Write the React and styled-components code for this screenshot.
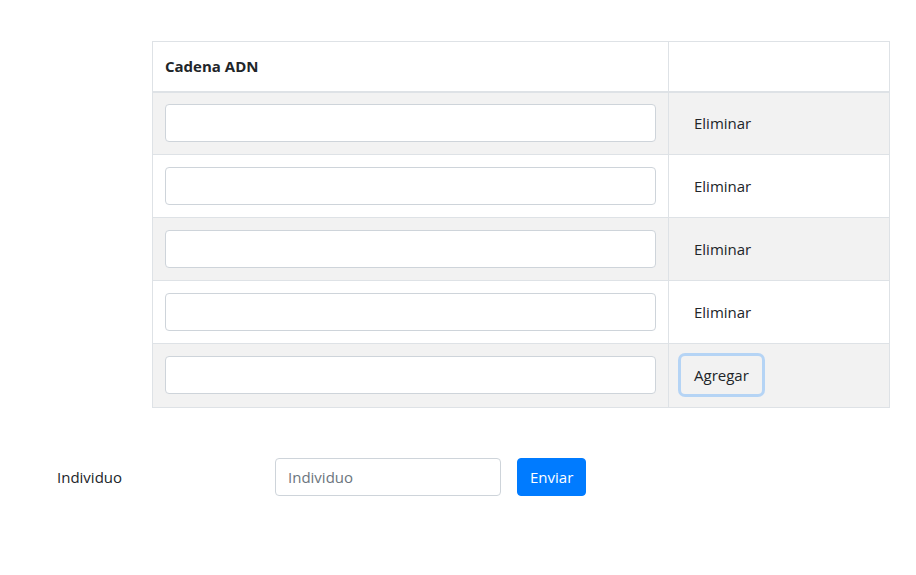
import React from "react";
import styled, { createGlobalStyle } from "styled-components";

const GlobalStyle = createGlobalStyle`
  body {
    margin: 0;
    background: #fff;
    color: #212529;
    font-family: "Open Sans", "Noto Sans", sans-serif;
    font-size: 15px;
  }
  * { box-sizing: border-box; }
`;

const Page = styled.div`
  padding: 41px 26px 0 0;
`;

const TableWrap = styled.div`
  margin-left: 152px;
`;

const Table = styled.table`
  width: 738px;
  border-collapse: collapse;
`;

const HeadCell = styled.th`
  text-align: left;
  font-weight: 700;
  height: 50px;
  padding: 0 12px;
  border: 1px solid #dee2e6;
  border-bottom: 2px solid #dee2e6;
  &:first-child { width: 516px; }
`;

const Row = styled.tr`
  background: ${(p) => (p.$striped ? "#f2f2f2" : "#fff")};
`;

const Cell = styled.td`
  height: ${(p) => (p.$tall ? "64px" : "63px")};
  padding: ${(p) => (p.$tall ? "0 12px 1px" : "0 12px")};
  border: 1px solid #dee2e6;
  vertical-align: middle;
`;

const TextInput = styled.input`
  display: block;
  width: 100%;
  height: 38px;
  padding: 6px 12px;
  font: inherit;
  color: #495057;
  background: #fff;
  border: 1px solid #ced4da;
  border-radius: 4px;
  outline: none;
  &::placeholder { color: #6c757d; }
`;

const Button = styled.button`
  height: 38px;
  padding: 0 12px;
  font: inherit;
  color: #212529;
  background: transparent;
  border: 1px solid transparent;
  border-radius: 4px;
  box-shadow: ${(p) => (p.$focused ? "0 0 0 3px rgba(0,123,255,.25)" : "none")};
  cursor: pointer;
`;

const PrimaryButton = styled(Button)`
  color: #fff;
  background: #007bff;
  border-color: #007bff;
`;

const FormRow = styled.div`
  display: flex;
  align-items: center;
  margin-top: 50px;
  padding-left: 57px;
`;

const Label = styled.label`
  width: 218px;
`;

const SmallInput = styled(TextInput)`
  width: 226px;
  margin-right: 16px;
`;

const rows = [false, false, false, false, true];

export default function App() {
  return (
    <Page>
      <GlobalStyle />
      <TableWrap>
        <Table>
          <thead>
            <tr>
              <HeadCell>Cadena ADN</HeadCell>
              <HeadCell></HeadCell>
            </tr>
          </thead>
          <tbody>
            {rows.map((isLast, i) => (
              <Row key={i} $striped={i % 2 === 0}>
                <Cell $tall={isLast}>
                  <TextInput />
                </Cell>
                <Cell $tall={isLast}>
                  {isLast ? (
                    <Button $focused>Agregar</Button>
                  ) : (
                    <Button>Eliminar</Button>
                  )}
                </Cell>
              </Row>
            ))}
          </tbody>
        </Table>
      </TableWrap>
      <FormRow>
        <Label>Individuo</Label>
        <SmallInput placeholder="Individuo" />
        <PrimaryButton>Enviar</PrimaryButton>
      </FormRow>
    </Page>
  );
}
